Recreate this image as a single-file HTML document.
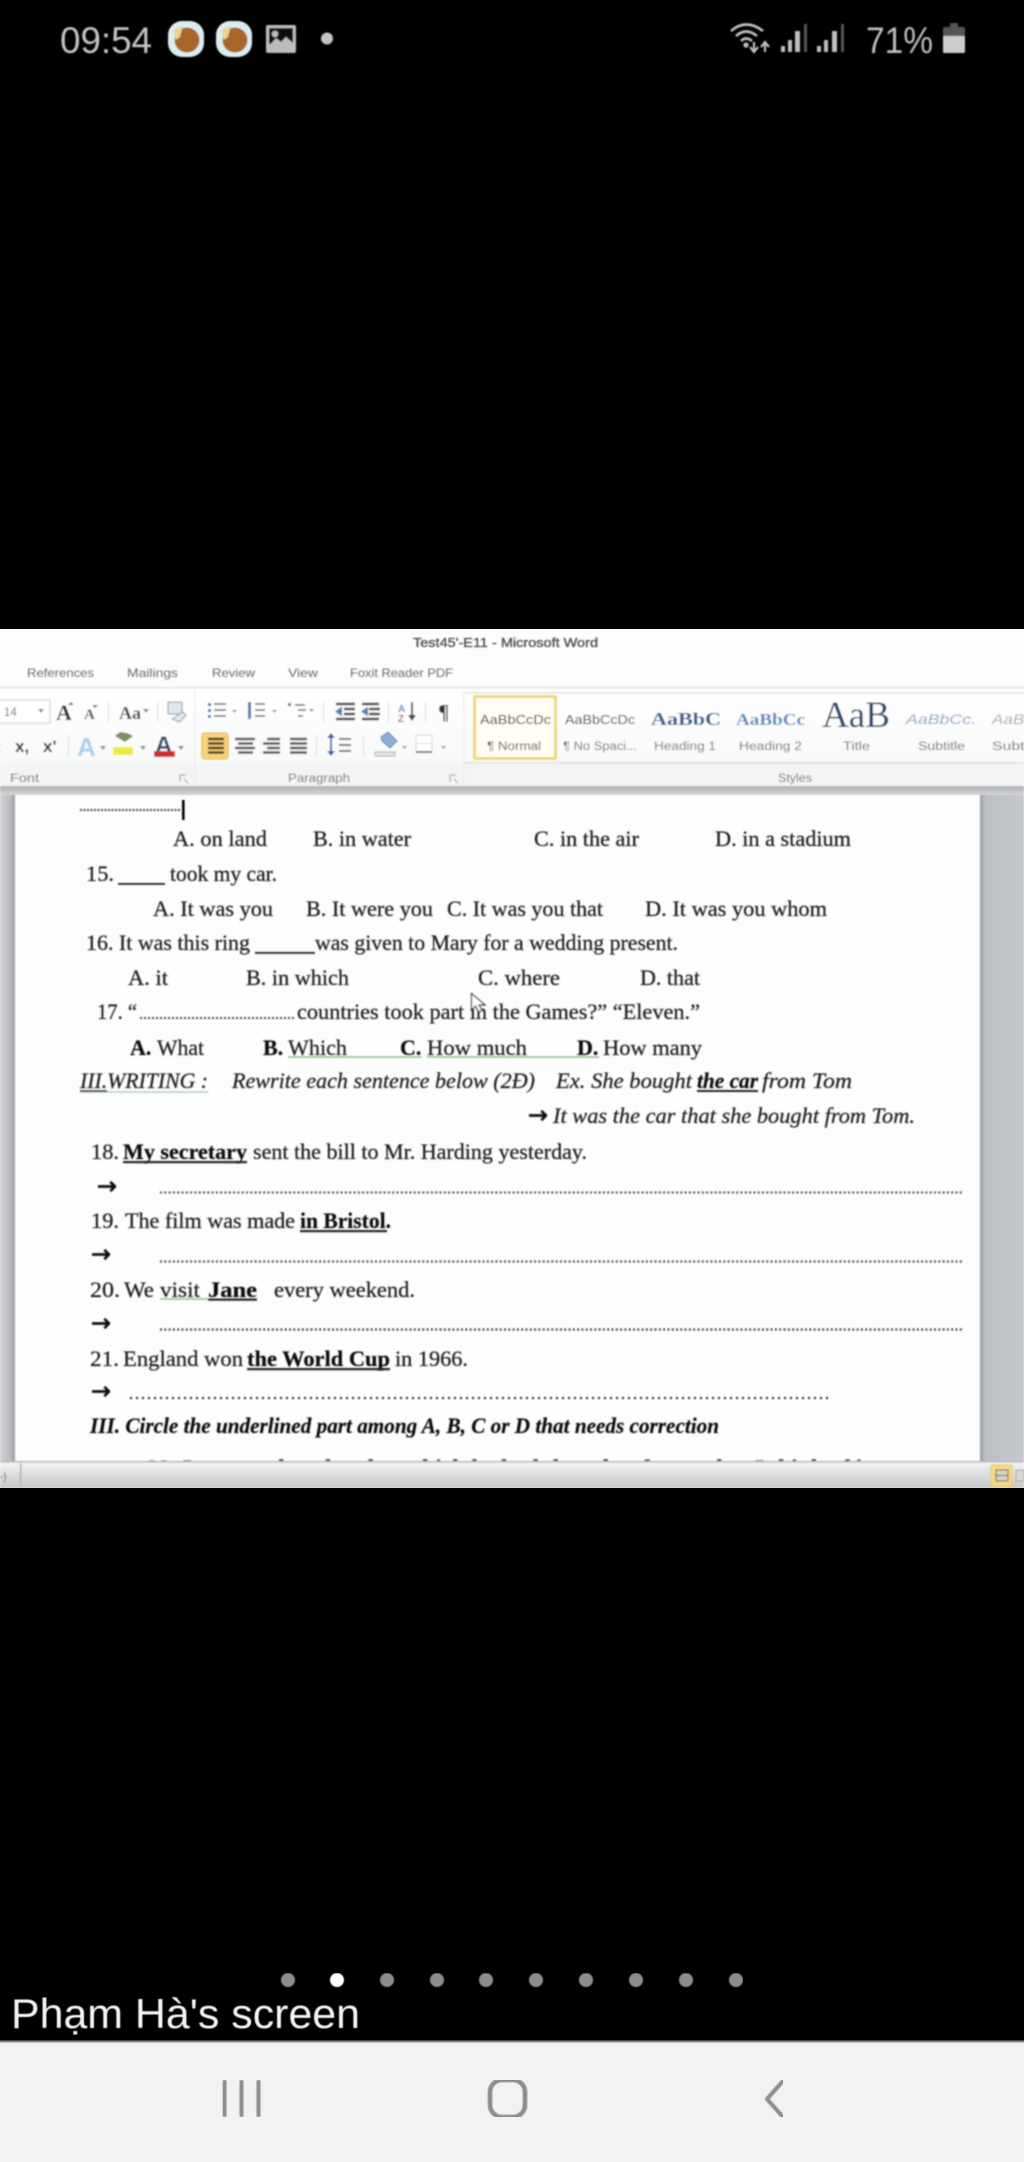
<!DOCTYPE html>
<html><head><meta charset="utf-8"><title>Phạm Hà's screen</title>
<style>
html,body{margin:0;padding:0;background:#000;width:1024px;height:2162px;overflow:hidden}
svg{display:block}
.s{font-family:"Liberation Sans",sans-serif}
.r{font-family:"Liberation Serif",serif}
.d{font-family:"Liberation Serif",serif;font-size:22px;fill:#1e1e1e;stroke:#222;stroke-width:.25}
.b{font-weight:bold;fill:#0c0c0c}
.i{font-style:italic}
.t{font-family:"Liberation Sans",sans-serif;font-size:12px;fill:#6a6a6a}
.l{font-family:"Liberation Sans",sans-serif;font-size:11.5px;fill:#707070}
.a{font-family:"DejaVu Sans",sans-serif;font-size:24px;fill:#111;stroke:#111;stroke-width:.7}
</style></head><body>
<svg width="1024" height="2162" viewBox="0 0 1024 2162" xmlns="http://www.w3.org/2000/svg">
<defs>
<filter id="b1" x="0" y="0" width="100%" height="100%"><feGaussianBlur stdDeviation="0.75"/></filter>
<filter id="b3" x="0" y="0" width="100%" height="100%"><feGaussianBlur stdDeviation="0.5"/></filter>
<filter id="b2" x="-5%" y="-5%" width="110%" height="110%"><feGaussianBlur stdDeviation="0.9"/></filter>
<linearGradient id="rib" x1="0" y1="0" x2="0" y2="1"><stop offset="0" stop-color="#ffffff"/><stop offset="1" stop-color="#f6f7f8"/></linearGradient>
<linearGradient id="sb" x1="0" y1="0" x2="0" y2="1"><stop offset="0" stop-color="#f4f4f4"/><stop offset="1" stop-color="#c4c5c7"/></linearGradient>
<linearGradient id="sh" x1="0" y1="0" x2="0" y2="1"><stop offset="0" stop-color="#b0b1b2"/><stop offset="1" stop-color="#d4d5d7"/></linearGradient>
<linearGradient id="gl" x1="0" y1="0" x2="1" y2="0"><stop offset="0" stop-color="#cfd1d3"/><stop offset="0.7" stop-color="#b8babd"/><stop offset="1" stop-color="#9da0a4"/></linearGradient>
<linearGradient id="gr" x1="0" y1="0" x2="1" y2="0"><stop offset="0" stop-color="#9a9da1"/><stop offset="0.12" stop-color="#bcbfc3"/><stop offset="1" stop-color="#c6c8cb"/></linearGradient>
<clipPath id="cl"><rect x="0" y="795" width="1024" height="667"/></clipPath>
</defs>

<rect width="1024" height="2162" fill="#000"/>

<!-- Status bar -->
<g filter="url(#b2)">
<text class="s" x="60" y="53" font-size="37" fill="#c4c4c4" textLength="92" lengthAdjust="spacingAndGlyphs">09:54</text>
<rect x="168" y="21" width="36" height="36" rx="14" fill="#dcedf2"/>
<circle cx="187" cy="40" r="12.500" fill="#a9652c"/>
<path d="M173 30 L183 26 L180 37 L176 40 Z" fill="#e6d68e"/>
<rect x="216" y="21" width="36" height="36" rx="14" fill="#dcedf2"/>
<circle cx="235" cy="40" r="12.500" fill="#a9652c"/>
<path d="M221 30 L231 26 L228 37 L224 40 Z" fill="#e6d68e"/>
<rect x="266" y="25" width="30" height="28" rx="2" fill="#bdbdbd"/>
<rect x="269" y="28" width="24" height="16" fill="#0a0a0a"/>
<path d="M269 46 L276 38 L281 42 L286 37 L293 43 V50 H269 Z" fill="#bdbdbd"/>
<circle cx="275" cy="34" r="3.200" fill="#bdbdbd"/>
<circle cx="327" cy="38.500" r="6" fill="#c4c4c4"/>
<!-- wifi -->
<g fill="none" stroke="#c0c0c0" stroke-width="2.600">
<path d="M731 31 Q746 18 763 31"/>
<path d="M736 36 Q746 27 757 36"/>
<path d="M741 41 Q746 36 752 41"/>
</g>
<circle cx="746" cy="45" r="2.600" fill="#c0c0c0"/>
<path d="M754 42 V51 M750 47 L754 52 L758 47 M765 52 V43 M761 47 L765 42 L769 47" stroke="#c0c0c0" stroke-width="2.200" fill="none"/>
<!-- signal -->
<g fill="#c0c0c0">
<rect x="781" y="46" width="4" height="6"/><rect x="788" y="40" width="4" height="12"/><rect x="795" y="31" width="5" height="21"/>
<rect x="817" y="46" width="4" height="6"/><rect x="824" y="40" width="4" height="12"/><rect x="832" y="31" width="5" height="21"/>
</g>
<rect x="804" y="24" width="3" height="28" fill="#555"/><rect x="841" y="24" width="3" height="28" fill="#555"/>
<text class="s" x="866" y="53" font-size="37" fill="#bdbdbd" textLength="67" lengthAdjust="spacingAndGlyphs">71%</text>
<rect x="950" y="23" width="8" height="5" fill="#555"/>
<rect x="943" y="27" width="22" height="10" rx="2" fill="#555"/>
<rect x="943" y="36" width="22" height="17" rx="1" fill="#cdcdcd"/>
</g>

<!-- Word window -->
<rect x="0" y="629" width="1024" height="859" fill="#fdfdfd"/>
<g filter="url(#b1)">
<text x="413" y="647" class="t" style="fill:#4a4a4a;font-size:13px;stroke:#4a4a4a;stroke-width:.3" textLength="185" lengthAdjust="spacingAndGlyphs">Test45'-E11 - Microsoft Word</text>
<text class="t" x="27" y="677" textLength="67" lengthAdjust="spacingAndGlyphs">References</text>
<text class="t" x="127" y="677" textLength="51" lengthAdjust="spacingAndGlyphs">Mailings</text>
<text class="t" x="212" y="677" textLength="43" lengthAdjust="spacingAndGlyphs">Review</text>
<text class="t" x="288" y="677" textLength="30" lengthAdjust="spacingAndGlyphs">View</text>
<text class="t" x="350" y="677" textLength="103" lengthAdjust="spacingAndGlyphs">Foxit Reader PDF</text>

<rect x="0" y="688" width="1024" height="98" fill="url(#rib)"/>
<rect x="0" y="687" width="1024" height="1.500" fill="#e2e3e4"/>
<rect x="0" y="763" width="1024" height="24" fill="#f3f4f5"/>
<rect x="0" y="786" width="1024" height="9" fill="url(#sh)"/>
<rect x="464" y="692" width="560" height="1.500" fill="#e0e1e2"/>
<rect x="464" y="762" width="560" height="1.500" fill="#e0e1e2"/>
<rect x="194" y="690" width="1.500" height="95" fill="#eeeff0"/>
<rect x="463" y="690" width="1.500" height="95" fill="#eeeff0"/>

<!-- Font group -->
<rect x="-2" y="700" width="52" height="23" fill="#fff" stroke="#dcdcdc" stroke-width="1.500"/>
<text class="l" x="4" y="716">14</text>
<path d="M38 709 h6 l-3 4 z M143 709 h6 l-3 4 z M100 746 h6 l-3 4 z" fill="#888"/>
<text class="r" x="56" y="720" font-size="22" font-weight="bold" fill="#333">A</text>
<path d="M68 705 l3 -3 l3 3 z" fill="#777"/>
<text class="r" x="84" y="719" font-size="15" font-weight="bold" fill="#444">A</text>
<path d="M92 705 h6 l-3 3 z" fill="#777"/>
<rect x="108" y="702" width="1" height="20" fill="#ddd"/>
<text class="r" x="119" y="719" font-size="18" font-weight="bold" fill="#444">Aa</text>
<rect x="157" y="702" width="1" height="20" fill="#ddd"/>
<rect x="168" y="702" width="14" height="12" fill="#dfe6ee" stroke="#8a94a0" stroke-width="1"/>
<path d="M172 719 l8 3 l6 -7 l-3 -3 z" fill="#e6e9ec" stroke="#909aa4"/>
<text class="s" x="-3" y="752" font-size="15" fill="#777">:</text>
<text class="s" x="15" y="752" font-size="17" font-weight="bold" fill="#333">x,</text>
<text class="s" x="43" y="752" font-size="17" font-weight="bold" fill="#333">x'</text>
<rect x="68" y="735" width="1" height="22" fill="#ddd"/>
<text class="s" x="77" y="756" font-size="26" font-weight="bold" fill="#a9d3ef">A</text>
<path d="M115 736 l10 6 l8 -6 l-6 -3 l-7 -1 z" fill="#7e8d62"/>
<rect x="113" y="747" width="20" height="8" fill="#f0ea3c"/>
<path d="M140 746 h6 l-3 4 z M178 746 h6 l-3 4 z" fill="#888"/>
<text class="s" x="155" y="753" font-size="24" font-weight="bold" fill="#33496e">A</text>
<rect x="154" y="751" width="21" height="6" fill="#d62a2a"/>
<!-- Paragraph group -->
<g stroke="#666" stroke-width="1.600">
<path d="M214 704 h12 M214 710 h12 M214 716 h12 M255 704 h10 M255 710 h10 M255 716 h10 M295 705 h10 M298 710 h8 M298 716 h5"/>
</g>
<g fill="#5577aa"><rect x="208" y="703" width="3" height="3"/><rect x="208" y="709" width="3" height="3"/><rect x="208" y="715" width="3" height="3"/><rect x="248" y="702" width="3" height="17"/><rect x="288" y="703" width="3" height="3"/></g>
<path d="M232 710 h5 l-2.500 3 z M272 710 h5 l-2.500 3 z M309 709 h5 l-2.500 3 z M402 746 h5 l-2.500 3 z M441 746 h5 l-2.500 3 z" fill="#999"/>
<rect x="323" y="702" width="1" height="20" fill="#ddd"/>
<g stroke="#444" stroke-width="2.400"><path d="M336 704 h19 M344 709 h11 M344 714 h11 M336 719 h19 M362 704 h17 M369 709 h11 M369 714 h11 M362 719 h17"/></g>
<path d="M335 711.500 l7 -5 v10 z M361 711.500 l7 -5 v10 z" fill="#5b7fb0"/>
<rect x="388" y="702" width="1" height="20" fill="#ddd"/>
<text class="s" x="398" y="712" font-size="10" font-weight="bold" fill="#6a7fb0">A</text>
<text class="s" x="398" y="722" font-size="10" font-weight="bold" fill="#a06a6a">Z</text>
<path d="M412 702 v15" stroke="#555" stroke-width="2" fill="none"/><path d="M408 715 h8 l-4 6 z" fill="#444"/>
<rect x="425" y="702" width="1" height="20" fill="#ddd"/>
<text class="r" x="438" y="719" font-size="21" font-weight="bold" fill="#333">¶</text>
<rect x="202" y="733" width="26" height="26" rx="3" fill="#f8d27a" stroke="#ecc262" stroke-width="1.600"/>
<g stroke="#4a3c18" stroke-width="2.600"><path d="M208 739 h16 M208 743.500 h16 M208 748 h16 M208 752.500 h16"/></g>
<g stroke="#555" stroke-width="2.600"><path d="M235 739 h20 M238 743.500 h15 M235 748 h20 M238 752.500 h15 M267 739 h13 M263 743.500 h17 M267 748 h13 M263 752.500 h17 M290 739 h17 M290 743.500 h17 M290 748 h17 M290 752.500 h17"/></g>
<rect x="316" y="735" width="1" height="22" fill="#ddd"/>
<path d="M331 734 v20" stroke="#4a70aa" stroke-width="2"/><path d="M327 738 l4 -5 l4 5 z M327 751 l4 5 l4 -5 z" fill="#3a68a8"/>
<g stroke="#666" stroke-width="1.800"><path d="M339 739 h12 M339 745 h12 M339 751 h12"/></g>
<rect x="363" y="735" width="1" height="22" fill="#ddd"/>
<path d="M381 737 l7 -5 l9 9 l-7 7 l-8 -7 z" fill="#8fb0d6" stroke="#5c7aa0"/>
<rect x="375" y="752" width="20" height="4" fill="#e8e8e8" stroke="#aaa"/>
<rect x="416" y="735" width="16" height="17" fill="#fff" stroke="#d4d4d4"/><rect x="416" y="751" width="16" height="2" fill="#777"/>
<rect x="417" y="743" width="14" height="1" fill="#ddd"/>
<!-- labels -->
<text class="l" x="10" y="782" textLength="29" lengthAdjust="spacingAndGlyphs">Font</text>
<text class="l" x="288" y="782" textLength="62" lengthAdjust="spacingAndGlyphs">Paragraph</text>
<text class="l" x="778" y="782" textLength="34" lengthAdjust="spacingAndGlyphs">Styles</text>
<path d="M180 775 h6 M180 775 v7 M184 779 l4 4 M450 775 h6 M450 775 v7 M454 779 l4 4" stroke="#a8a8a8" stroke-width="1.200" fill="none"/>
<!-- Styles -->
<rect x="474.500" y="696.500" width="81" height="62" fill="#fffdf4" stroke="#f1d678" stroke-width="3" rx="1"/>
<text class="s" x="480" y="724" font-size="13" fill="#333" textLength="71" lengthAdjust="spacingAndGlyphs">AaBbCcDc</text>
<text class="l" x="487" y="750" style="fill:#555" textLength="54" lengthAdjust="spacingAndGlyphs">¶ Normal</text>
<text class="s" x="565" y="724" font-size="13" fill="#333" textLength="70" lengthAdjust="spacingAndGlyphs">AaBbCcDc</text>
<text class="l" x="563" y="750" textLength="74" lengthAdjust="spacingAndGlyphs">¶ No Spaci...</text>
<text class="r" x="651" y="725" font-size="18" font-weight="bold" fill="#2f5f94" textLength="70" lengthAdjust="spacingAndGlyphs">AaBbC</text>
<text class="l" x="654" y="750" textLength="62" lengthAdjust="spacingAndGlyphs">Heading 1</text>
<text class="r" x="736" y="725" font-size="17" font-weight="bold" fill="#5c8ac0" textLength="69" lengthAdjust="spacingAndGlyphs">AaBbCc</text>
<text class="l" x="739" y="750" textLength="63" lengthAdjust="spacingAndGlyphs">Heading 2</text>
<text class="r" x="822" y="727" font-size="37" fill="#2b4a6a" textLength="68" lengthAdjust="spacingAndGlyphs">AaB</text>
<text class="l" x="843" y="750" textLength="27" lengthAdjust="spacingAndGlyphs">Title</text>
<text class="s" x="906" y="724" font-size="14" font-style="italic" fill="#8fa4c4" textLength="70" lengthAdjust="spacingAndGlyphs">AaBbCc.</text>
<text class="l" x="918" y="750" textLength="47" lengthAdjust="spacingAndGlyphs">Subtitle</text>
<text class="s" x="992" y="724" font-size="14" font-style="italic" fill="#a8acb0" textLength="36" lengthAdjust="spacingAndGlyphs">AaBl</text>
<text class="l" x="992" y="750" textLength="36" lengthAdjust="spacingAndGlyphs">Subtl</text>

<!-- Document gutters -->
<rect x="0" y="795" width="15" height="667" fill="url(#gl)"/>
<rect x="980" y="795" width="44" height="667" fill="url(#gr)"/>

<!-- Document text -->
<g clip-path="url(#cl)">
<path d="M80 810 h100" stroke="#444" stroke-width="2" stroke-dasharray="2 1.500"/>
<rect x="182" y="800" width="2.600" height="20" fill="#000"/>
<text class="d" x="173" y="846" textLength="94" lengthAdjust="spacingAndGlyphs">A. on land</text>
<text class="d" x="313" y="846" textLength="98" lengthAdjust="spacingAndGlyphs">B. in water</text>
<text class="d" x="534" y="846" textLength="105" lengthAdjust="spacingAndGlyphs">C. in the air</text>
<text class="d" x="715" y="846" textLength="136" lengthAdjust="spacingAndGlyphs">D. in a stadium</text>
<text class="d" x="86" y="881" textLength="28" lengthAdjust="spacingAndGlyphs">15.</text>
<rect x="118" y="883" width="47" height="1.800" fill="#222"/>
<text class="d" x="170" y="881" textLength="107" lengthAdjust="spacingAndGlyphs">took my car.</text>
<text class="d" x="153" y="916" textLength="120" lengthAdjust="spacingAndGlyphs">A. It was you</text>
<text class="d" x="306" y="916" textLength="127" lengthAdjust="spacingAndGlyphs">B. It were you</text>
<text class="d" x="447" y="916" textLength="156" lengthAdjust="spacingAndGlyphs">C. It was you that</text>
<text class="d" x="645" y="916" textLength="182" lengthAdjust="spacingAndGlyphs">D. It was you whom</text>
<text class="d" x="86" y="950" textLength="164" lengthAdjust="spacingAndGlyphs">16. It was this ring</text>
<rect x="255" y="952" width="60" height="1.800" fill="#222"/>
<text class="d" x="315" y="950" textLength="363" lengthAdjust="spacingAndGlyphs">was given to Mary for a wedding present.</text>
<text class="d" x="128" y="985" textLength="40" lengthAdjust="spacingAndGlyphs">A. it</text>
<text class="d" x="246" y="985" textLength="103" lengthAdjust="spacingAndGlyphs">B. in which</text>
<text class="d" x="478" y="985" textLength="82" lengthAdjust="spacingAndGlyphs">C. where</text>
<text class="d" x="640" y="985" textLength="60" lengthAdjust="spacingAndGlyphs">D. that</text>
<text class="d" x="97" y="1019" textLength="40" lengthAdjust="spacingAndGlyphs">17. “</text>
<path d="M140 1018 h155" stroke="#333" stroke-width="1.800" stroke-dasharray="2 2"/>
<text class="d" x="297" y="1019" textLength="403" lengthAdjust="spacingAndGlyphs">countries took part in the Games?”  “Eleven.”</text>
<path d="M471.500 993.500 V1010 L475.500 1006 L479 1012 L482 1010.500 L479 1005 L485 1005 Z" fill="#fff" stroke="#333" stroke-width="1.200"/>
<text class="d b" x="130" y="1055">A.</text><text class="d" x="157" y="1055" textLength="47" lengthAdjust="spacingAndGlyphs">What</text>
<text class="d b" x="263" y="1055">B.</text><text class="d" x="288" y="1055" textLength="59" lengthAdjust="spacingAndGlyphs">Which</text>
<text class="d b" x="400" y="1055">C.</text><text class="d" x="427" y="1055" textLength="100" lengthAdjust="spacingAndGlyphs">How much</text>
<text class="d b" x="577" y="1055">D.</text><text class="d" x="603" y="1055" textLength="99" lengthAdjust="spacingAndGlyphs">How many</text>
<path d="M288 1057 h134 M427 1057 h172" stroke="#8fbc8f" stroke-width="1.600"/>
<text class="d i" x="80" y="1088" textLength="128" lengthAdjust="spacingAndGlyphs">III.WRITING :</text>
<path d="M80 1092 h128" stroke="#8fbc8f" stroke-width="1.600" stroke-dasharray="2 1"/>
<path d="M80 1091 h27" stroke="#333" stroke-width="1.400"/>
<text class="d i" x="232" y="1088" textLength="303" lengthAdjust="spacingAndGlyphs">Rewrite each sentence below (2Đ)</text>
<text class="d i" x="556" y="1088" textLength="136" lengthAdjust="spacingAndGlyphs">Ex. She bought</text>
<text class="d i b" x="697" y="1088" textLength="61" lengthAdjust="spacingAndGlyphs">the car</text>
<rect x="697" y="1090" width="61" height="2" fill="#222"/>
<text class="d i" x="762" y="1088" textLength="90" lengthAdjust="spacingAndGlyphs">from Tom</text>
<text class="a" x="528" y="1123" textLength="20" lengthAdjust="spacingAndGlyphs">→</text>
<text class="d i" x="553" y="1123" textLength="362" lengthAdjust="spacingAndGlyphs">It was the car that she bought from Tom.</text>

<text class="d" x="91" y="1159" textLength="28" lengthAdjust="spacingAndGlyphs">18.</text>
<text class="d b" x="123" y="1159" textLength="124" lengthAdjust="spacingAndGlyphs">My secretary</text>
<rect x="123" y="1161" width="124" height="2.200" fill="#222"/>
<text class="d" x="253" y="1159" textLength="334" lengthAdjust="spacingAndGlyphs">sent the bill to Mr. Harding yesterday.</text>
<text class="a" x="97" y="1194" textLength="20" lengthAdjust="spacingAndGlyphs">→</text>
<path d="M160 1192.500 H962" stroke="#555" stroke-width="2.200" stroke-dasharray="2 2.300"/>

<text class="d" x="91" y="1228" textLength="28" lengthAdjust="spacingAndGlyphs">19.</text>
<text class="d" x="125" y="1228" textLength="170" lengthAdjust="spacingAndGlyphs">The film was made</text>
<text class="d b" x="300" y="1228" textLength="91" lengthAdjust="spacingAndGlyphs">in Bristol.</text>
<rect x="300" y="1230" width="87" height="2.200" fill="#222"/>
<text class="a" x="91" y="1262" textLength="20" lengthAdjust="spacingAndGlyphs">→</text>
<path d="M160 1261.500 H962" stroke="#555" stroke-width="2.200" stroke-dasharray="2 2.300"/>

<text class="d" x="90" y="1297" textLength="30" lengthAdjust="spacingAndGlyphs">20.</text>
<text class="d" x="124" y="1297" textLength="30" lengthAdjust="spacingAndGlyphs">We</text>
<text class="d" x="160" y="1297" textLength="40" lengthAdjust="spacingAndGlyphs">visit</text>
<path d="M160 1299 h48" stroke="#8fbc8f" stroke-width="1.600"/>
<text class="d b" x="208" y="1297" textLength="49" lengthAdjust="spacingAndGlyphs">Jane</text>
<rect x="208" y="1298.500" width="49" height="2.200" fill="#222"/>
<text class="d" x="274" y="1297" textLength="141" lengthAdjust="spacingAndGlyphs">every weekend.</text>
<text class="a" x="91" y="1331" textLength="20" lengthAdjust="spacingAndGlyphs">→</text>
<path d="M160 1329.500 H962" stroke="#444" stroke-width="2.200" stroke-dasharray="2 2.300"/>

<text class="d" x="90" y="1366" textLength="29" lengthAdjust="spacingAndGlyphs">21.</text>
<text class="d" x="123" y="1366" textLength="120" lengthAdjust="spacingAndGlyphs">England won</text>
<text class="d b" x="247" y="1366" textLength="143" lengthAdjust="spacingAndGlyphs">the World Cup</text>
<rect x="247" y="1368" width="143" height="2.200" fill="#222"/>
<text class="d" x="395" y="1366" textLength="73" lengthAdjust="spacingAndGlyphs">in 1966.</text>
<text class="a" x="91" y="1399" textLength="20" lengthAdjust="spacingAndGlyphs">→</text>
<path d="M130 1398 H828" stroke="#333" stroke-width="2.200" stroke-dasharray="2 4"/>

<text class="d i b" x="90" y="1433" textLength="629" lengthAdjust="spacingAndGlyphs">III. Circle the underlined part among A, B, C or D that needs correction</text>
<text class="d b" x="147" y="1475" textLength="723" lengthAdjust="spacingAndGlyphs">22. It seems that the plan which he had thought of was what I think of it</text>
</g>

<!-- Bottom status bar -->
<rect x="0" y="1462" width="1024" height="26" fill="url(#sb)"/>
<rect x="0" y="1461" width="1024" height="1.500" fill="#b8b9ba"/>
<rect x="20" y="1463" width="1.500" height="24" fill="#aeb0b2"/>
<text class="l" x="0" y="1480" style="font-size:10px;fill:#666">-)</text>
<rect x="991" y="1465" width="21" height="21" rx="2" fill="#f5d98a" stroke="#eecd6a" stroke-width="1.500"/>
<rect x="996" y="1470" width="12" height="11" fill="#d8d4c0" stroke="#555"/>
<path d="M996 1475.500 h12" stroke="#555"/>
<rect x="1016" y="1470" width="8" height="11" fill="#d8d8d8" stroke="#aaa"/>
</g>

<!-- Page dots and label -->
<g filter="url(#b3)">
<g fill="#8d8d8d">
<circle cx="288" cy="1980" r="7"/><circle cx="387" cy="1980" r="7"/><circle cx="437" cy="1980" r="7"/><circle cx="486" cy="1980" r="7"/><circle cx="536" cy="1980" r="7"/><circle cx="586" cy="1980" r="7"/><circle cx="636" cy="1980" r="7"/><circle cx="686" cy="1980" r="7"/><circle cx="736" cy="1980" r="7"/>
</g>
<circle cx="337" cy="1980" r="7" fill="#fff"/>
<text class="s" x="11" y="2028" font-size="42" fill="#f4f4f4" textLength="349" lengthAdjust="spacingAndGlyphs">Phạm Hà's screen</text>
</g>

<!-- Nav bar -->
<rect x="0" y="2042" width="1024" height="120" fill="#f2f2f2"/>
<rect x="0" y="2040.500" width="1024" height="2" fill="#888"/>
<g filter="url(#b3)">
<g fill="#8c8c8c"><rect x="222.500" y="2080" width="4" height="37" rx="1.500"/><rect x="239.500" y="2080" width="4" height="37" rx="1.500"/><rect x="256.500" y="2080" width="4" height="37" rx="1.500"/></g>
<rect x="490" y="2080" width="35" height="37" rx="12" fill="none" stroke="#8c8c8c" stroke-width="4.500"/>
<path d="M783 2081 L767 2099 L783 2117" fill="none" stroke="#8c8c8c" stroke-width="4" stroke-linecap="round" stroke-linejoin="round"/>
</g>
</svg>
</body></html>
